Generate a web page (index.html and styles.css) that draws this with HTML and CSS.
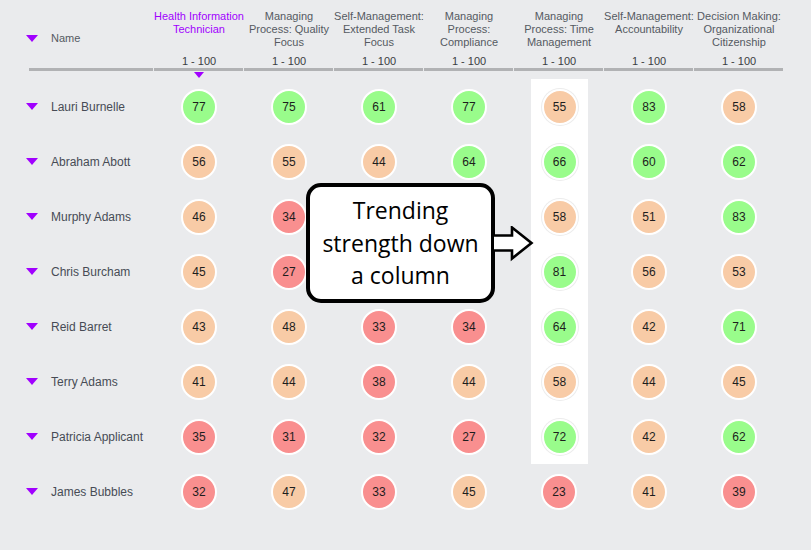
FILE: index.html
```html
<!DOCTYPE html>
<html>
<head>
<meta charset="utf-8">
<link rel="stylesheet" href="styles.css">
</head>
<body>
<div class="board">
  <div class="head">
    <div class="name-head"><span class="tri"></span><span>Name</span></div>
    <div class="col-head sel"><div class="title">Health Information<br>Technician</div><div class="range">1 - 100</div></div>
    <div class="col-head"><div class="title">Managing<br>Process: Quality<br>Focus</div><div class="range">1 - 100</div></div>
    <div class="col-head"><div class="title">Self-Management:<br>Extended Task<br>Focus</div><div class="range">1 - 100</div></div>
    <div class="col-head"><div class="title">Managing<br>Process:<br>Compliance</div><div class="range">1 - 100</div></div>
    <div class="col-head"><div class="title">Managing<br>Process: Time<br>Management</div><div class="range">1 - 100</div></div>
    <div class="col-head"><div class="title">Self-Management:<br>Accountability</div><div class="range">1 - 100</div></div>
    <div class="col-head"><div class="title">Decision Making:<br>Organizational<br>Citizenship</div><div class="range">1 - 100</div></div>
  </div>
  <div class="rule">
    <span></span><span></span><span></span><span></span><span></span><span></span><span></span><span></span>
  </div>
  <div class="sort-row"><span></span><span class="sort-tri"></span></div>

  <div class="row">
    <div class="name"><span class="tri"></span>Lauri Burnelle</div>
    <div class="cell"><span class="dot g">77</span></div>
    <div class="cell"><span class="dot g">75</span></div>
    <div class="cell"><span class="dot g">61</span></div>
    <div class="cell"><span class="dot g">77</span></div>
    <div class="cell hl"><span class="dot o">55</span></div>
    <div class="cell"><span class="dot g">83</span></div>
    <div class="cell"><span class="dot o">58</span></div>
  </div>
  <div class="row">
    <div class="name"><span class="tri"></span>Abraham Abott</div>
    <div class="cell"><span class="dot o">56</span></div>
    <div class="cell"><span class="dot o">55</span></div>
    <div class="cell"><span class="dot o">44</span></div>
    <div class="cell"><span class="dot g">64</span></div>
    <div class="cell hl"><span class="dot g">66</span></div>
    <div class="cell"><span class="dot g">60</span></div>
    <div class="cell"><span class="dot g">62</span></div>
  </div>
  <div class="row">
    <div class="name"><span class="tri"></span>Murphy Adams</div>
    <div class="cell"><span class="dot o">46</span></div>
    <div class="cell"><span class="dot r">34</span></div>
    <div class="cell"></div>
    <div class="cell"></div>
    <div class="cell hl"><span class="dot o">58</span></div>
    <div class="cell"><span class="dot o">51</span></div>
    <div class="cell"><span class="dot g">83</span></div>
  </div>
  <div class="row">
    <div class="name"><span class="tri"></span>Chris Burcham</div>
    <div class="cell"><span class="dot o">45</span></div>
    <div class="cell"><span class="dot r">27</span></div>
    <div class="cell"></div>
    <div class="cell"></div>
    <div class="cell hl"><span class="dot g">81</span></div>
    <div class="cell"><span class="dot o">56</span></div>
    <div class="cell"><span class="dot o">53</span></div>
  </div>
  <div class="row">
    <div class="name"><span class="tri"></span>Reid Barret</div>
    <div class="cell"><span class="dot o">43</span></div>
    <div class="cell"><span class="dot o">48</span></div>
    <div class="cell"><span class="dot r">33</span></div>
    <div class="cell"><span class="dot r">34</span></div>
    <div class="cell hl"><span class="dot g">64</span></div>
    <div class="cell"><span class="dot o">42</span></div>
    <div class="cell"><span class="dot g">71</span></div>
  </div>
  <div class="row">
    <div class="name"><span class="tri"></span>Terry Adams</div>
    <div class="cell"><span class="dot o">41</span></div>
    <div class="cell"><span class="dot o">44</span></div>
    <div class="cell"><span class="dot r">38</span></div>
    <div class="cell"><span class="dot o">44</span></div>
    <div class="cell hl"><span class="dot o">58</span></div>
    <div class="cell"><span class="dot o">44</span></div>
    <div class="cell"><span class="dot o">45</span></div>
  </div>
  <div class="row">
    <div class="name"><span class="tri"></span>Patricia Applicant</div>
    <div class="cell"><span class="dot r">35</span></div>
    <div class="cell"><span class="dot r">31</span></div>
    <div class="cell"><span class="dot r">32</span></div>
    <div class="cell"><span class="dot r">27</span></div>
    <div class="cell hl"><span class="dot g">72</span></div>
    <div class="cell"><span class="dot o">42</span></div>
    <div class="cell"><span class="dot g">62</span></div>
  </div>
  <div class="row">
    <div class="name"><span class="tri"></span>James Bubbles</div>
    <div class="cell"><span class="dot r">32</span></div>
    <div class="cell"><span class="dot o">47</span></div>
    <div class="cell"><span class="dot r">33</span></div>
    <div class="cell"><span class="dot o">45</span></div>
    <div class="cell"><span class="dot r">23</span></div>
    <div class="cell"><span class="dot o">41</span></div>
    <div class="cell"><span class="dot r">39</span></div>
  </div>

  <div class="callout">
    <div class="callout-box">Trending<br>strength down<br>a column</div>
    <svg class="callout-arrow" width="44" height="36" viewBox="0 0 44 36">
      <path d="M0 9.5 H18 V1.5 L37.5 17 L18 32.5 V24.5 H0" fill="#fff" stroke="#000" stroke-width="2.6" stroke-linejoin="miter"/>
    </svg>
  </div>
</div>
</body>
</html>
```

FILE: styles.css
```css
html, body {
  margin: 0;
  padding: 0;
  background: #eaebed;
}
body {
  font-family: "Liberation Sans", Arial, sans-serif;
  width: 811px;
  height: 550px;
  overflow: hidden;
}
.board {
  position: relative;
}
.head {
  display: grid;
  grid-template-columns: 154px repeat(7, 90px);
  padding-top: 10px;
}
.name-head {
  display: flex;
  align-items: center;
  padding-left: 26px;
  gap: 13px;
  font-size: 11px;
  color: #555a62;
  padding-bottom: 2px;
}
.tri {
  width: 0;
  height: 0;
  border-left: 6.5px solid transparent;
  border-right: 6.5px solid transparent;
  border-top: 7px solid #a100ff;
  flex: none;
}
.col-head {
  display: flex;
  flex-direction: column;
  align-items: center;
  text-align: center;
  font-size: 11px;
  line-height: 13px;
  color: #555a62;
}
.col-head .title {
  height: 39px;
  white-space: nowrap;
}
.col-head.sel .title {
  color: #a100ff;
}
.col-head .range {
  margin-top: 6px;
  font-size: 11px;
  color: #3a3d42;
}
.rule {
  display: grid;
  grid-template-columns: 124px repeat(7, 89px);
  column-gap: 1px;
  margin-left: 29px;
  width: 755px;
}
.rule span {
  height: 3px;
  background: #b1b2b4;
}
.sort-row {
  display: grid;
  grid-template-columns: 154px 90px;
  height: 8px;
}
.sort-tri {
  justify-self: center;
  margin-top: 1px;
  width: 0;
  height: 0;
  border-left: 5.5px solid transparent;
  border-right: 5.5px solid transparent;
  border-top: 6px solid #a100ff;
}
.row {
  display: grid;
  grid-template-columns: 154px repeat(7, 90px);
  height: 55px;
  align-items: stretch;
}
.name {
  display: flex;
  align-items: center;
  gap: 13px;
  padding-left: 26px;
  font-size: 12px;
  color: #474b55;
}
.cell {
  display: flex;
  align-items: center;
  justify-content: center;
}
.cell.hl {
  background: #fff;
  width: 57px;
  justify-self: center;
  margin-left: 1px;
}
.dot {
  width: 32px;
  height: 32px;
  border: 2.5px solid #fff;
  border-radius: 50%;
  display: flex;
  align-items: center;
  justify-content: center;
  font-size: 12px;
  color: #1d1d1d;
}
.cell.hl .dot {
  box-shadow: 0 0 0 1px #ececec;
}
.dot.g { background: #99fc8b; }
.dot.o { background: #f8cba6; }
.dot.r { background: #f98f8f; }

.callout {
  position: absolute;
  left: 306px;
  top: 183px;
  display: flex;
  align-items: flex-start;
}
.callout-box {
  box-sizing: border-box;
  width: 189px;
  height: 120px;
  background: #fff;
  border: 4px solid #000;
  border-radius: 15px;
  font-family: "Open Sans", "Noto Sans", sans-serif;
  font-size: 23px;
  line-height: 32.5px;
  color: #000;
  text-align: center;
  padding-top: 7px;
}
.callout-arrow {
  margin-left: -1px;
  margin-top: 43px;
}
```
